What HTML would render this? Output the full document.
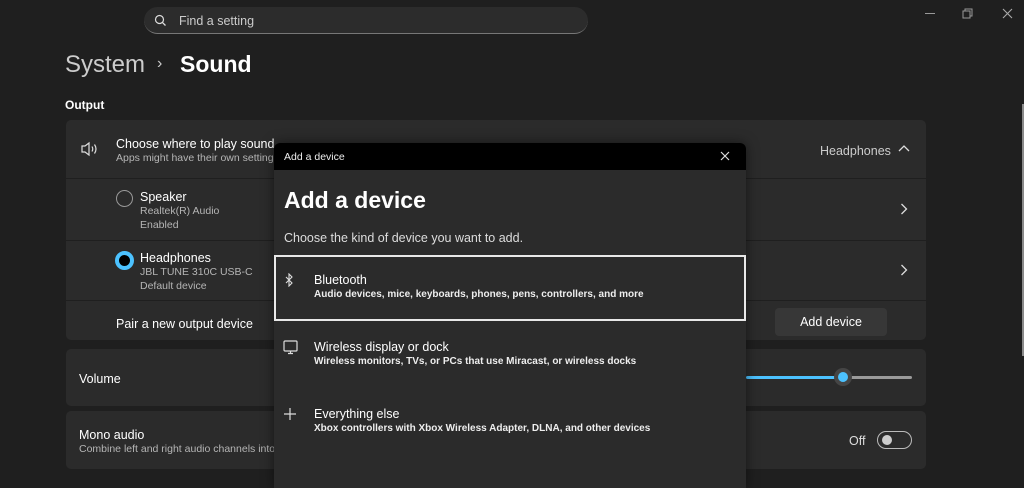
<!DOCTYPE html>
<html><head><style>
*{margin:0;padding:0;box-sizing:border-box}
body{width:1024px;height:488px;background:#1f1f1f;font-family:"Liberation Sans",sans-serif;color:#fff;position:relative;overflow:hidden}
.a{position:absolute}
.card{position:absolute;left:66px;width:860px;background:#2b2b2b;border-radius:5px}
.t{font-size:12.5px;color:#fff;white-space:nowrap}
.s{font-size:10.5px;color:#b5b5b5;white-space:nowrap}
</style></head><body>
<!-- search -->
<div class="a" style="left:144px;top:7px;width:444px;height:27px;background:#2c2c2c;border-radius:14px;border-bottom:1px solid #777"></div>
<svg class="a" style="left:154px;top:14px" width="13" height="13" viewBox="0 0 13 13"><circle cx="5.5" cy="5.5" r="4" fill="none" stroke="#ddd" stroke-width="1.2"/><path d="M8.4 8.4L11.5 11.5" stroke="#ddd" stroke-width="1.3"/></svg>
<div class="a" style="left:179px;top:14px;font-size:12.5px;color:#ccc">Find a setting</div>
<!-- window controls -->
<div class="a" style="left:925px;top:13px;width:10px;height:1px;background:#999"></div>
<svg class="a" style="left:962px;top:8px" width="11" height="11"><rect x="1" y="3" width="7" height="7" fill="none" stroke="#999"/><path d="M3 3V1h7v7H8" fill="none" stroke="#999"/></svg>
<svg class="a" style="left:1002px;top:8px" width="11" height="11"><path d="M1 1l9 9M10 1l-9 9" stroke="#aaa" stroke-width="1.1"/></svg>
<!-- breadcrumb -->
<div class="a" style="left:65px;top:51px;font-size:24px;color:#ccc">System</div>
<div class="a" style="left:157px;top:55px;font-size:16px;color:#ccc">›</div>
<div class="a" style="left:180px;top:51px;font-size:23px;color:#fff;font-weight:bold">Sound</div>
<div class="a" style="left:65px;top:98px;font-size:12px;font-weight:bold">Output</div>
<!-- card 1 -->
<div class="card" style="top:120px;height:220px"></div>
<div class="a" style="left:66px;top:178px;width:860px;height:1px;background:#1f1f1f"></div>
<div class="a" style="left:66px;top:240px;width:860px;height:1px;background:#1f1f1f"></div>
<div class="a" style="left:66px;top:300px;width:860px;height:1px;background:#1f1f1f"></div>
<svg class="a" style="left:80px;top:141px" width="20" height="16" viewBox="0 0 20 16"><path d="M2 5h3l4-3v12l-4-3H2z" fill="none" stroke="#ddd" stroke-width="1.2"/><path d="M12 5.5q1.5 2.5 0 5M14.5 3.5q3 4.5 0 9" fill="none" stroke="#ddd" stroke-width="1.2"/></svg>
<div class="a t" style="left:116px;top:137px">Choose where to play sound</div>
<div class="a s" style="left:116px;top:152px">Apps might have their own settings</div>
<div class="a" style="left:820px;top:144px;font-size:12.5px;color:#ccc">Headphones</div>
<svg class="a" style="left:898px;top:144px" width="12" height="8"><path d="M1 7l5-5 5 5" fill="none" stroke="#ddd" stroke-width="1.3"/></svg>
<div class="a" style="left:116px;top:190px;width:17px;height:17px;border:1.5px solid #999;border-radius:50%"></div>
<div class="a t" style="left:140px;top:190px">Speaker</div>
<div class="a s" style="left:140px;top:205px">Realtek(R) Audio</div>
<div class="a s" style="left:140px;top:219px">Enabled</div>
<svg class="a" style="left:900px;top:203px" width="8" height="12"><path d="M1.5 1l5 5-5 5" fill="none" stroke="#ddd" stroke-width="1.3"/></svg>
<div class="a" style="left:115px;top:251px;width:19px;height:19px;border:4.5px solid #4cc2ff;background:#000;border-radius:50%"></div>
<div class="a t" style="left:140px;top:251px">Headphones</div>
<div class="a s" style="left:140px;top:266px">JBL TUNE 310C USB-C</div>
<div class="a s" style="left:140px;top:280px">Default device</div>
<svg class="a" style="left:900px;top:264px" width="8" height="12"><path d="M1.5 1l5 5-5 5" fill="none" stroke="#ddd" stroke-width="1.3"/></svg>
<div class="a t" style="left:116px;top:317px">Pair a new output device</div>
<div class="a" style="left:775px;top:308px;width:112px;height:28px;background:#373737;border-radius:4px;font-size:12.5px;text-align:center;line-height:28px">Add device</div>
<!-- volume -->
<div class="card" style="top:349px;height:57px"></div>
<div class="a t" style="left:79px;top:372px">Volume</div>
<div class="a" style="left:746px;top:376px;width:97px;height:3px;background:#4cc2ff;border-radius:2px"></div>
<div class="a" style="left:850px;top:376px;width:62px;height:3px;background:#9a9a9a;border-radius:2px"></div>
<div class="a" style="left:834px;top:368px;width:18px;height:18px;background:#454545;border-radius:50%"></div>
<div class="a" style="left:838px;top:372px;width:10px;height:10px;background:#4cc2ff;border-radius:50%"></div>
<!-- mono -->
<div class="card" style="top:411px;height:58px"></div>
<div class="a t" style="left:79px;top:428px">Mono audio</div>
<div class="a s" style="left:79px;top:443px">Combine left and right audio channels into one</div>
<div class="a" style="left:849px;top:434px;font-size:12.5px;color:#ddd">Off</div>
<div class="a" style="left:877px;top:431px;width:35px;height:18px;border:1.2px solid #bbb;border-radius:9px"></div>
<div class="a" style="left:882px;top:435px;width:10px;height:10px;background:#ccc;border-radius:50%"></div>
<!-- scrollbar -->
<div class="a" style="left:1022px;top:104px;width:2px;height:252px;background:#8a8a8a"></div>
<!-- dialog -->
<div class="a" style="left:274px;top:143px;width:472px;height:345px;background:#2b2b2b;border-radius:6px 6px 0 0;overflow:hidden;box-shadow:0 0 12px rgba(0,0,0,.5)">
 <div style="height:27px;background:#000"></div>
</div>
<div class="a" style="left:284px;top:151px;font-size:10.5px;color:#eee">Add a device</div>
<svg class="a" style="left:720px;top:151px" width="10" height="10"><path d="M1 1l8 8M9 1l-8 8" stroke="#ddd" stroke-width="1.2"/></svg>
<div class="a" style="left:284px;top:187px;font-size:23px;font-weight:bold;color:#fff">Add a device</div>
<div class="a t" style="left:284px;top:231px;color:#ddd">Choose the kind of device you want to add.</div>
<div class="a" style="left:274px;top:255px;width:472px;height:66px;border:2px solid #e8e8e8"></div>
<svg class="a" style="left:284px;top:273px" width="10" height="14" viewBox="0 0 10 14"><path d="M2 4l6 6-3 3V1l3 3-6 6" fill="none" stroke="#ddd" stroke-width="1.1"/></svg>
<div class="a t" style="left:314px;top:273px">Bluetooth</div>
<div class="a" style="left:314px;top:289px;font-size:10px;font-weight:bold;color:#eee">Audio devices, mice, keyboards, phones, pens, controllers, and more</div>
<svg class="a" style="left:283px;top:340px" width="15" height="15" viewBox="0 0 15 15"><rect x="1" y="1" width="13" height="10" rx="1" fill="none" stroke="#ddd" stroke-width="1.2"/><path d="M5 13.5h5M7.5 11v2.5" stroke="#ddd" stroke-width="1.2"/></svg>
<div class="a t" style="left:314px;top:340px">Wireless display or dock</div>
<div class="a" style="left:314px;top:356px;font-size:10px;font-weight:bold;color:#eee">Wireless monitors, TVs, or PCs that use Miracast, or wireless docks</div>
<svg class="a" style="left:284px;top:408px" width="12" height="12"><path d="M6 0v12M0 6h12" stroke="#ddd" stroke-width="1.2"/></svg>
<div class="a t" style="left:314px;top:407px">Everything else</div>
<div class="a" style="left:314px;top:423px;font-size:10px;font-weight:bold;color:#eee">Xbox controllers with Xbox Wireless Adapter, DLNA, and other devices</div>
</body></html>
